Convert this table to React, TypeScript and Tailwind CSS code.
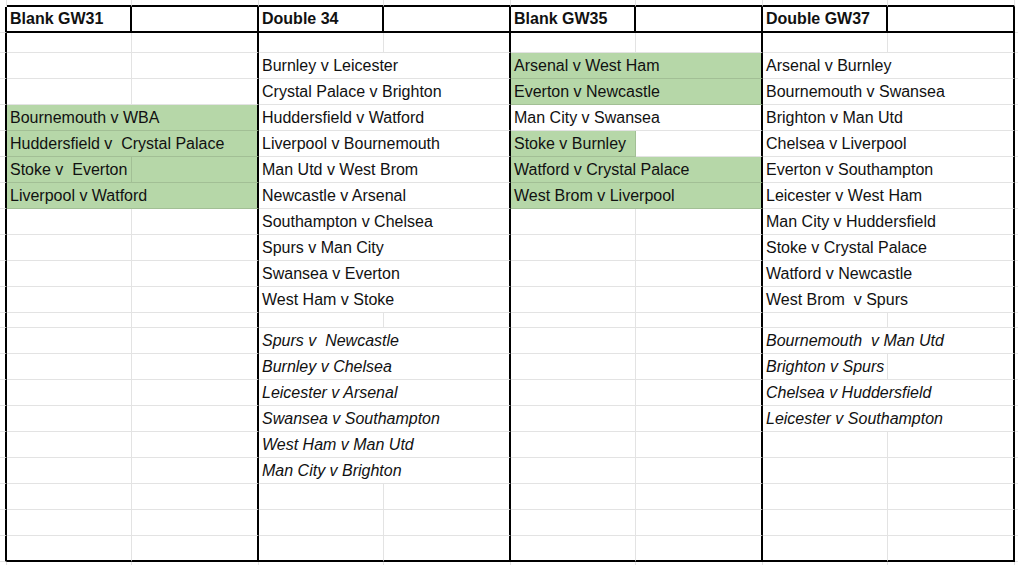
import React from "react";

interface Cell {
  t?: string;
  i?: boolean; // italic
  g?: 1 | 2; // green fill over 1 or 2 columns
  s?: boolean; // text overflows into the second column
}

interface Row {
  h: string;
  cells: Cell[];
  last?: boolean;
}

const E: Cell = {};

const rows: Row[] = [
  { h: "h-[20px]", cells: [E, E, E, E] },
  {
    h: "h-[26px]",
    cells: [E, { t: "Burnley v Leicester", s: true }, { t: "Arsenal v West Ham", s: true, g: 2 }, { t: "Arsenal v Burnley", s: true }],
  },
  {
    h: "h-[26px]",
    cells: [E, { t: "Crystal Palace v Brighton", s: true }, { t: "Everton v Newcastle", s: true, g: 2 }, { t: "Bournemouth v Swansea", s: true }],
  },
  {
    h: "h-[26px]",
    cells: [{ t: "Bournemouth v WBA", s: true, g: 2 }, { t: "Huddersfield v Watford", s: true }, { t: "Man City v Swansea", s: true }, { t: "Brighton v Man Utd", s: true }],
  },
  {
    h: "h-[26px]",
    cells: [{ t: "Huddersfield v  Crystal Palace", s: true, g: 2 }, { t: "Liverpool v Bournemouth", s: true }, { t: "Stoke v Burnley", g: 1 }, { t: "Chelsea v Liverpool", s: true }],
  },
  {
    h: "h-[26px]",
    cells: [{ t: "Stoke v  Everton", g: 2 }, { t: "Man Utd v West Brom", s: true }, { t: "Watford v Crystal Palace", s: true, g: 2 }, { t: "Everton v Southampton", s: true }],
  },
  {
    h: "h-[26px]",
    cells: [{ t: "Liverpool v Watford", s: true, g: 2 }, { t: "Newcastle v Arsenal", s: true }, { t: "West Brom v Liverpool", s: true, g: 2 }, { t: "Leicester v West Ham", s: true }],
  },
  { h: "h-[26px]", cells: [E, { t: "Southampton v Chelsea", s: true }, E, { t: "Man City v Huddersfield", s: true }] },
  { h: "h-[26px]", cells: [E, { t: "Spurs v Man City", s: true }, E, { t: "Stoke v Crystal Palace", s: true }] },
  { h: "h-[26px]", cells: [E, { t: "Swansea v Everton", s: true }, E, { t: "Watford v Newcastle", s: true }] },
  { h: "h-[26px]", cells: [E, { t: "West Ham v Stoke", s: true }, E, { t: "West Brom  v Spurs", s: true }] },
  { h: "h-[15px]", cells: [E, E, E, E] },
  { h: "h-[26px]", cells: [E, { t: "Spurs v  Newcastle", s: true, i: true }, E, { t: "Bournemouth  v Man Utd", s: true, i: true }] },
  { h: "h-[26px]", cells: [E, { t: "Burnley v Chelsea", s: true, i: true }, E, { t: "Brighton v Spurs", i: true }] },
  { h: "h-[26px]", cells: [E, { t: "Leicester v Arsenal", s: true, i: true }, E, { t: "Chelsea v Huddersfield", s: true, i: true }] },
  { h: "h-[26px]", cells: [E, { t: "Swansea v Southampton", s: true, i: true }, E, { t: "Leicester v Southampton", s: true, i: true }] },
  { h: "h-[26px]", cells: [E, { t: "West Ham v Man Utd", s: true, i: true }, E, E] },
  { h: "h-[26px]", cells: [E, { t: "Man City v Brighton", s: true, i: true }, E, E] },
  { h: "h-[26px]", cells: [E, E, E, E] },
  { h: "h-[26px]", cells: [E, E, E, E] },
  { h: "h-[26px]", cells: [E, E, E, E], last: true },
];

const headers = ["Blank GW31", "Double 34", "Blank GW35", "Double GW37"];

const Text = ({ c }: { c: Cell }) =>
  c.t ? (
    <span className={`whitespace-pre leading-normal pl-[3px] ${c.i ? "italic" : ""}`}>{c.t}</span>
  ) : null;

const Group = ({ c, last }: { c: Cell; last?: boolean }) => {
  const bottom = last ? "border-b-2 border-b-black" : "border-b border-b-[#0000001c]";
  if (c.s) {
    return (
      <div
        className={`w-[252px] flex items-end border-r-2 border-r-black ${bottom} ${
          c.g ? "bg-[#b6d7a8]" : ""
        }`}
      >
        <Text c={c} />
      </div>
    );
  }
  return (
    <>
      <div
        className={`w-[125px] flex items-end overflow-visible border-r border-r-[#0000001c] ${bottom} ${
          c.g ? "bg-[#b6d7a8]" : ""
        }`}
      >
        <Text c={c} />
      </div>
      <div className={`w-[127px] border-r-2 border-r-black ${bottom} ${c.g === 2 ? "bg-[#b6d7a8]" : ""}`} />
    </>
  );
};

const App: React.FC = () => {
  return (
    <div className="w-[1018px] h-[565px] overflow-hidden bg-white text-[#111] text-[16px] font-['Liberation_Sans',Arial,sans-serif] flex flex-col">
      {/* row above the table */}
      <div className="flex h-[7px] shrink-0">
        <div className="w-[7px] border-r border-r-[#0000001c]" />
        {headers.map((h) => (
          <React.Fragment key={h}>
            <div className="w-[125px] border-r border-r-[#0000001c] border-b-2 border-b-black" />
            <div className="w-[127px] border-r border-r-[#0000001c] border-b-2 border-b-black" />
          </React.Fragment>
        ))}
        <div className="flex-1" />
      </div>

      {/* header row */}
      <div className="flex h-[26px] shrink-0">
        <div className="w-[7px] border-r-2 border-r-black border-b border-b-[#0000001c]" />
        {headers.map((h) => (
          <React.Fragment key={h}>
            <div className="w-[125px] flex items-end border-r-2 border-r-black border-b-2 border-b-black">
              <span className="whitespace-pre leading-normal pl-[3px] font-bold">{h}</span>
            </div>
            <div className="w-[127px] border-r-2 border-r-black border-b-2 border-b-black" />
          </React.Fragment>
        ))}
        <div className="flex-1 border-b border-b-[#0000001c]" />
      </div>

      {rows.map((r, i) => (
        <div key={i} className={`flex shrink-0 ${r.h}`}>
          <div className="w-[7px] border-r-2 border-r-black border-b border-b-[#0000001c]" />
          {r.cells.map((c, j) => (
            <Group key={j} c={c} last={r.last} />
          ))}
          <div className="flex-1 border-b border-b-[#0000001c]" />
        </div>
      ))}

      {/* row below the table */}
      <div className="flex flex-1">
        <div className="w-[7px] border-r border-r-[#0000001c]" />
        {headers.map((h) => (
          <React.Fragment key={h}>
            <div className="w-[125px] border-r border-r-[#0000001c]" />
            <div className="w-[127px] border-r border-r-[#0000001c]" />
          </React.Fragment>
        ))}
        <div className="flex-1" />
      </div>
    </div>
  );
};

export default App;
